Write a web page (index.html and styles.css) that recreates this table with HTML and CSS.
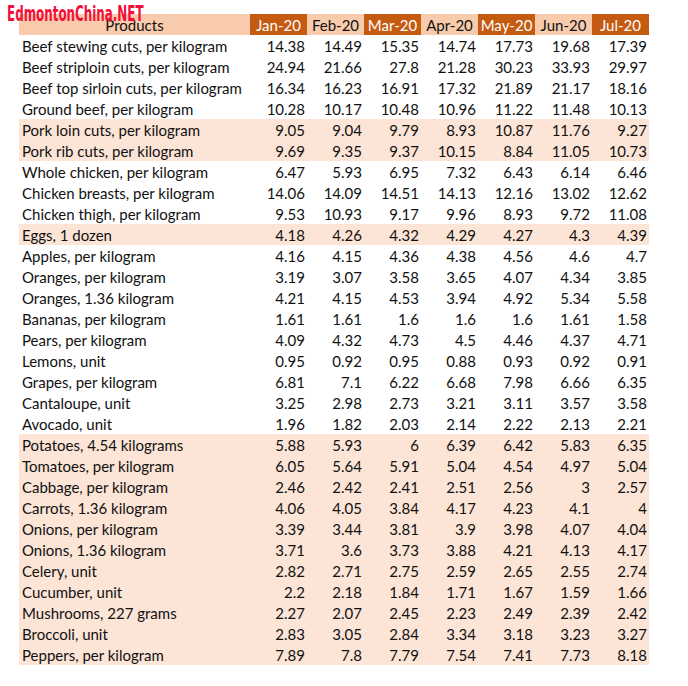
FILE: index.html
```html
<!DOCTYPE html>
<html>
<head>
<meta charset="utf-8">
<link rel="stylesheet" href="styles.css">
</head>
<body>
<div class="page">
  <div class="logo">EdmontonChina.NET</div>
  <table class="prices">
    <thead>
      <tr>
        <th class="prod">Products</th>
        <th class="dark">Jan-20</th>
        <th>Feb-20</th>
        <th class="dark">Mar-20</th>
        <th>Apr-20</th>
        <th class="dark">May-20</th>
        <th>Jun-20</th>
        <th class="dark">Jul-20</th>
      </tr>
    </thead>
    <tbody>
      <tr><td>Beef stewing cuts, per kilogram</td><td>14.38</td><td>14.49</td><td>15.35</td><td>14.74</td><td>17.73</td><td>19.68</td><td>17.39</td></tr>
      <tr><td>Beef striploin cuts, per kilogram</td><td>24.94</td><td>21.66</td><td>27.8</td><td>21.28</td><td>30.23</td><td>33.93</td><td>29.97</td></tr>
      <tr><td>Beef top sirloin cuts, per kilogram</td><td>16.34</td><td>16.23</td><td>16.91</td><td>17.32</td><td>21.89</td><td>21.17</td><td>18.16</td></tr>
      <tr><td>Ground beef, per kilogram</td><td>10.28</td><td>10.17</td><td>10.48</td><td>10.96</td><td>11.22</td><td>11.48</td><td>10.13</td></tr>
      <tr class="hl"><td>Pork loin cuts, per kilogram</td><td>9.05</td><td>9.04</td><td>9.79</td><td>8.93</td><td>10.87</td><td>11.76</td><td>9.27</td></tr>
      <tr class="hl"><td>Pork rib cuts, per kilogram</td><td>9.69</td><td>9.35</td><td>9.37</td><td>10.15</td><td>8.84</td><td>11.05</td><td>10.73</td></tr>
      <tr><td>Whole chicken, per kilogram</td><td>6.47</td><td>5.93</td><td>6.95</td><td>7.32</td><td>6.43</td><td>6.14</td><td>6.46</td></tr>
      <tr><td>Chicken breasts, per kilogram</td><td>14.06</td><td>14.09</td><td>14.51</td><td>14.13</td><td>12.16</td><td>13.02</td><td>12.62</td></tr>
      <tr><td>Chicken thigh, per kilogram</td><td>9.53</td><td>10.93</td><td>9.17</td><td>9.96</td><td>8.93</td><td>9.72</td><td>11.08</td></tr>
      <tr class="hl"><td>Eggs, 1 dozen</td><td>4.18</td><td>4.26</td><td>4.32</td><td>4.29</td><td>4.27</td><td>4.3</td><td>4.39</td></tr>
      <tr><td>Apples, per kilogram</td><td>4.16</td><td>4.15</td><td>4.36</td><td>4.38</td><td>4.56</td><td>4.6</td><td>4.7</td></tr>
      <tr><td>Oranges, per kilogram</td><td>3.19</td><td>3.07</td><td>3.58</td><td>3.65</td><td>4.07</td><td>4.34</td><td>3.85</td></tr>
      <tr><td>Oranges, 1.36 kilogram</td><td>4.21</td><td>4.15</td><td>4.53</td><td>3.94</td><td>4.92</td><td>5.34</td><td>5.58</td></tr>
      <tr><td>Bananas, per kilogram</td><td>1.61</td><td>1.61</td><td>1.6</td><td>1.6</td><td>1.6</td><td>1.61</td><td>1.58</td></tr>
      <tr><td>Pears, per kilogram</td><td>4.09</td><td>4.32</td><td>4.73</td><td>4.5</td><td>4.46</td><td>4.37</td><td>4.71</td></tr>
      <tr><td>Lemons, unit</td><td>0.95</td><td>0.92</td><td>0.95</td><td>0.88</td><td>0.93</td><td>0.92</td><td>0.91</td></tr>
      <tr><td>Grapes, per kilogram</td><td>6.81</td><td>7.1</td><td>6.22</td><td>6.68</td><td>7.98</td><td>6.66</td><td>6.35</td></tr>
      <tr><td>Cantaloupe, unit</td><td>3.25</td><td>2.98</td><td>2.73</td><td>3.21</td><td>3.11</td><td>3.57</td><td>3.58</td></tr>
      <tr><td>Avocado, unit</td><td>1.96</td><td>1.82</td><td>2.03</td><td>2.14</td><td>2.22</td><td>2.13</td><td>2.21</td></tr>
      <tr class="hl"><td>Potatoes, 4.54 kilograms</td><td>5.88</td><td>5.93</td><td>6</td><td>6.39</td><td>6.42</td><td>5.83</td><td>6.35</td></tr>
      <tr class="hl"><td>Tomatoes, per kilogram</td><td>6.05</td><td>5.64</td><td>5.91</td><td>5.04</td><td>4.54</td><td>4.97</td><td>5.04</td></tr>
      <tr class="hl"><td>Cabbage, per kilogram</td><td>2.46</td><td>2.42</td><td>2.41</td><td>2.51</td><td>2.56</td><td>3</td><td>2.57</td></tr>
      <tr class="hl"><td>Carrots, 1.36 kilogram</td><td>4.06</td><td>4.05</td><td>3.84</td><td>4.17</td><td>4.23</td><td>4.1</td><td>4</td></tr>
      <tr class="hl"><td>Onions, per kilogram</td><td>3.39</td><td>3.44</td><td>3.81</td><td>3.9</td><td>3.98</td><td>4.07</td><td>4.04</td></tr>
      <tr class="hl"><td>Onions, 1.36 kilogram</td><td>3.71</td><td>3.6</td><td>3.73</td><td>3.88</td><td>4.21</td><td>4.13</td><td>4.17</td></tr>
      <tr class="hl"><td>Celery, unit</td><td>2.82</td><td>2.71</td><td>2.75</td><td>2.59</td><td>2.65</td><td>2.55</td><td>2.74</td></tr>
      <tr class="hl"><td>Cucumber, unit</td><td>2.2</td><td>2.18</td><td>1.84</td><td>1.71</td><td>1.67</td><td>1.59</td><td>1.66</td></tr>
      <tr class="hl"><td>Mushrooms, 227 grams</td><td>2.27</td><td>2.07</td><td>2.45</td><td>2.23</td><td>2.49</td><td>2.39</td><td>2.42</td></tr>
      <tr class="hl"><td>Broccoli, unit</td><td>2.83</td><td>3.05</td><td>2.84</td><td>3.34</td><td>3.18</td><td>3.23</td><td>3.27</td></tr>
      <tr class="hl"><td>Peppers, per kilogram</td><td>7.89</td><td>7.8</td><td>7.79</td><td>7.54</td><td>7.41</td><td>7.73</td><td>8.18</td></tr>
    </tbody>
  </table>
</div>
</body>
</html>
```

FILE: styles.css
```css
html, body {
  margin: 0;
  padding: 0;
  background: #ffffff;
}

.page {
  position: relative;
  padding: 14px 0 0 19px;
  font-family: Lato, "Open Sans", sans-serif;
}

.logo {
  position: absolute;
  left: 7px;
  top: 1px;
  font-family: "DejaVu Sans Condensed", "DejaVu Sans", sans-serif;
  font-weight: bold;
  font-size: 21px;
  line-height: 26px;
  color: #f2103a;
  transform: scaleX(0.63);
  transform-origin: left top;
  white-space: nowrap;
  z-index: 2;
}

.prices {
  border-collapse: collapse;
  table-layout: fixed;
  width: 630px;
  font-size: 15px;
  color: #111111;
}

.prices th,
.prices td {
  height: 21px;
  padding: 1px 0 0 0;
  box-sizing: border-box;
  line-height: 20px;
  white-space: nowrap;
  overflow: hidden;
}

.prices th {
  width: 57px;
  font-weight: normal;
  text-align: center;
  background: #f8cbad;
  color: #111111;
}

.prices th.prod {
  width: 231px;
}

.prices th.dark {
  background: #c55a11;
  color: #ffffff;
}

.prices td {
  text-align: right;
  padding-right: 2px;
}

.prices td:first-child {
  text-align: left;
  padding-right: 0;
  padding-left: 3px;
}

.prices tr.hl td {
  background: #fce4d6;
}
```
